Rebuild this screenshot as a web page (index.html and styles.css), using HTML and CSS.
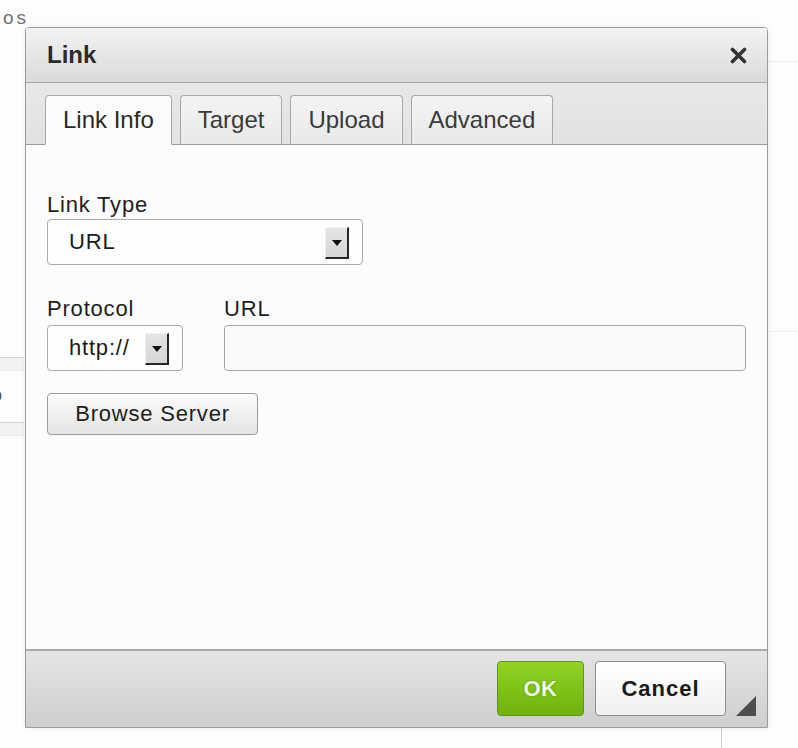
FILE: index.html
```html
<!DOCTYPE html>
<html>
<head>
<meta charset="utf-8">
<link rel="stylesheet" href="styles.css">
</head>
<body>
<div class="page">
  <div class="page-left">
    <div class="crumb">os</div>
    <div class="band band-a"></div>
    <div class="cell-o"><span>o</span></div>
    <div class="band band-b"></div>
  </div>
  <div class="page-mid"><div class="vline"></div></div>
  <div class="page-right">
    <div class="hline hl-a"></div>
    <div class="hline hl-b"></div>
  </div>
</div>

<div class="dialog">
  <div class="dlg-title">
    <span class="dlg-title-text">Link</span>
    <svg class="dlg-close" width="17" height="17" viewBox="0 0 17 17"><path d="M2.5 2.5 L14.5 14.5 M14.5 2.5 L2.5 14.5" stroke="#333" stroke-width="3.6" stroke-linecap="round"/></svg>
  </div>
  <div class="tabs">
    <div class="tab active">Link Info</div>
    <div class="tab">Target</div>
    <div class="tab">Upload</div>
    <div class="tab">Advanced</div>
  </div>
  <div class="content">
    <div class="label">Link Type</div>
    <div class="select wide">
      <span class="select-val">URL</span>
      <span class="arrow-btn"><span class="tri"></span></span>
    </div>
    <div class="row">
      <div class="field proto">
        <div class="label">Protocol</div>
        <div class="select">
          <span class="select-val">http://</span>
          <span class="arrow-btn"><span class="tri"></span></span>
        </div>
      </div>
      <div class="field url">
        <div class="label">URL</div>
        <div class="input"></div>
      </div>
    </div>
    <div class="btn browse">Browse Server</div>
  </div>
  <div class="footer">
    <div class="btn ok">OK</div>
    <div class="btn cancel">Cancel</div>
    <span class="resize"></span>
  </div>
</div>
</body>
</html>
```
FILE: styles.css
```css
* { box-sizing: border-box; }
html, body { margin: 0; padding: 0; }
body {
  background: #fefdfe;
  font-family: "Liberation Sans", Arial, sans-serif;
  color: #222;
  width: 798px;
  height: 748px;
  overflow: hidden;
  position: relative;
}

/* background page */
.page {
  display: grid;
  grid-template-columns: 24px 1fr 30px;
  height: 748px;
}
.page-left { min-width: 0; }
.crumb {
  margin-top: 7px;
  font-size: 19px;
  line-height: 22px;
  letter-spacing: 3px;
  color: #707070;
  padding-left: 3px;
  white-space: nowrap;
  width: 30px;
}
.band {
  height: 14px;
  background: #f3f2f3;
  border-top: 1px solid #d4d4d4;
  border-bottom: 1px solid #ececec;
}
.band-a { margin-top: 328px; }
.cell-o {
  margin-top: 14px;
  height: 20px;
  overflow: hidden;
  font-size: 18px;
  line-height: 20px;
  color: #555;
}
.cell-o span { display: inline-block; margin-left: -8px; }
.band-b { margin-top: 17px; }
.page-mid { position: relative; }
.vline {
  margin-top: 727px;
  margin-left: 697px;
  width: 1px;
  height: 21px;
  background: #cfcfcf;
}
.hline { height: 1px; background: #ececec; }
.hl-a { margin-top: 61px; }
.hl-b { margin-top: 269px; background: #f1f1f1; }

/* dialog */
.dialog {
  position: absolute;
  left: 25px;
  top: 27px;
  width: 743px;
  height: 701px;
  border: 1px solid #9c9c9c;
  border-radius: 4px 4px 0 0;
  background: #fdfcfd;
  display: flex;
  flex-direction: column;
  box-shadow: 0 0 6px rgba(0,0,0,0.08);
}
.dlg-title {
  height: 55px;
  flex: none;
  border-bottom: 1px solid #a6a6a6;
  background: linear-gradient(#f3f3f3, #dadada);
  border-radius: 3px 3px 0 0;
  display: flex;
  align-items: center;
  justify-content: space-between;
  padding: 0 20px 0 21px;
}
.dlg-title-text {
  font-weight: bold;
  font-size: 24px;
  color: #2b2b2b;
}
.dlg-close { display: block; }

.tabs {
  height: 62px;
  flex: none;
  display: flex;
  align-items: flex-end;
  gap: 8px;
  padding-left: 19px;
  background: linear-gradient(#e8e8e8, #e2e2e2);
  border-bottom: 1px solid #9a9a9a;
}
.tab {
  height: 50px;
  margin-bottom: -1px;
  padding: 0 17px;
  display: flex;
  align-items: center;
  font-size: 24px;
  color: #3a3a3a;
  border: 1px solid #a8a8a8;
  border-bottom-color: #9a9a9a;
  border-radius: 4px 4px 0 0;
  background: linear-gradient(#f4f4f4, #e9e9e9);
}
.tab.active {
  background: #fcfcfc;
  border-bottom-color: #fcfcfc;
  color: #2a2a2a;
}

.content {
  flex: 1;
  padding: 47px 21px 0 21px;
  background: #fdfcfd;
}
.label {
  font-size: 22px;
  line-height: 26px;
  letter-spacing: 0.8px;
  color: #1e1e1e;
  margin-bottom: 1px;
}
.select {
  height: 46px;
  border: 1px solid #aaa;
  border-radius: 4px;
  background: #fefefe;
  display: flex;
  align-items: center;
  justify-content: space-between;
  padding-left: 21px;
  padding-right: 13px;
}
.select.wide { width: 316px; }
.select-val {
  font-size: 22px;
  letter-spacing: 0.8px;
  color: #1a1a1a;
}
.arrow-btn {
  width: 24px;
  height: 32px;
  display: flex;
  align-items: center;
  justify-content: center;
  background: linear-gradient(#e4e4e4, #d6d6d6);
  border-top: 1px solid #f2f2f2;
  border-left: 1px solid #f2f2f2;
  border-right: 2px solid #262626;
  border-bottom: 2px solid #262626;
  margin-top: 2px;
}
.tri {
  width: 0;
  height: 0;
  border-left: 5px solid transparent;
  border-right: 5px solid transparent;
  border-top: 6px solid #111;
}
.row {
  display: flex;
  gap: 41px;
  margin-top: 31px;
}
.row .label { margin-bottom: 3px; }
.field.proto { width: 136px; flex: none; }
.field.url { flex: 1; }
.input {
  height: 46px;
  border: 1px solid #a4a4a4;
  border-radius: 4px;
  background: #fbfafb;
}
.btn {
  display: flex;
  align-items: center;
  justify-content: center;
  border-radius: 4px;
}
.browse {
  margin-top: 22px;
  width: 211px;
  height: 42px;
  border: 1px solid #9c9c9c;
  background: linear-gradient(#fbfbfb, #e4e4e4);
  font-size: 22px;
  letter-spacing: 0.8px;
  color: #1e1e1e;
}

.footer {
  height: 78px;
  flex: none;
  border-top: 2px solid #a9a9a9;
  background: linear-gradient(#e6e5e6, #cfcecf);
  display: flex;
  justify-content: flex-end;
  align-items: flex-start;
  gap: 11px;
  padding: 10px 41px 0 0;
  position: relative;
}
.ok {
  width: 87px;
  height: 55px;
  border: 1px solid #5d9a12;
  background: linear-gradient(#92d324, #6db20d);
  color: #f4fbe8;
  font-weight: bold;
  font-size: 22px;
  letter-spacing: 0.5px;
  text-shadow: 0 0 2px #4d8a08;
}
.cancel {
  width: 131px;
  height: 55px;
  border: 1px solid #8e8e8e;
  background: linear-gradient(#ffffff, #efefef);
  color: #1a1a1a;
  font-weight: bold;
  font-size: 22px;
  letter-spacing: 1px;
}
.resize {
  position: absolute;
  right: 11px;
  bottom: 11px;
  width: 0;
  height: 0;
  border-left: 20px solid transparent;
  border-bottom: 20px solid #4e4e4e;
}
```
